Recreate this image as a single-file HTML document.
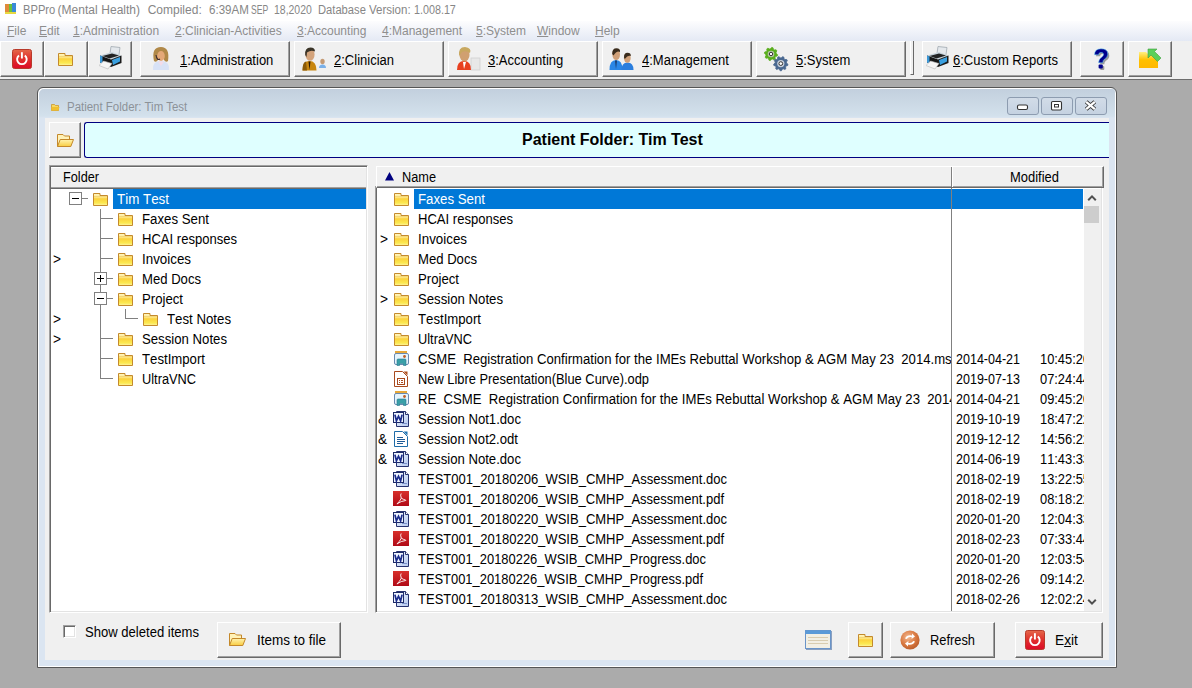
<!DOCTYPE html>
<html><head><meta charset="utf-8">
<style>
*{box-sizing:border-box;margin:0;padding:0}
html,body{width:1192px;height:688px;overflow:hidden;background:#ababab;font-family:"Liberation Sans",sans-serif;font-size:13px;color:#000}
.a{position:absolute}
u{text-decoration:underline}
.tt{position:absolute;top:3px;font-size:12px;color:#868686;white-space:nowrap}
.mi{position:absolute;top:24px;font-size:12px;color:#8e8e8e;white-space:nowrap}
.btn{position:absolute;top:41px;height:36px;background:#f0f0f0;border-top:1px solid #fff;border-left:1px solid #fff;border-right:1px solid #696969;border-bottom:1px solid #696969;box-shadow:inset -1px -1px 0 #a0a0a0}
.bt{position:absolute;top:8px;font-size:14px;line-height:20px;white-space:nowrap;transform:scaleX(0.93);transform-origin:0 0}
.cap{position:absolute;top:97px;width:32px;height:18px;border:1px solid #8d9cb0;border-radius:3px;background:linear-gradient(#d2dce8,#c5d2e1)}
.pbtn{position:absolute;background:#f0f0f0;border-top:1px solid #fff;border-left:1px solid #fff;border-right:1px solid #696969;border-bottom:1px solid #696969;box-shadow:inset -1px -1px 0 #a0a0a0}
.sunk{position:absolute;background:#fff;border-top:1px solid #a0a0a0;border-left:1px solid #a0a0a0;border-right:1px solid #fff;border-bottom:1px solid #fff;box-shadow:inset 1px 1px 0 #696969,inset -1px -1px 0 #e3e3e3}
.row{position:absolute;height:20px;white-space:nowrap;font-size:14px;line-height:20px;font-kerning:none;transform-origin:0 0}
.lb{position:absolute;white-space:nowrap;font-size:14px;line-height:20px;font-kerning:none;transform-origin:0 0}
.sel{position:absolute;background:#0078d7}
</style></head><body>
<svg width="0" height="0" style="position:absolute">
<defs>
<linearGradient id="fg" x1="0" y1="0" x2="0" y2="1">
<stop offset="0" stop-color="#fff8c8"/><stop offset="0.3" stop-color="#ffe88a"/><stop offset="0.45" stop-color="#fcd23c"/><stop offset="0.8" stop-color="#fbea52"/><stop offset="1" stop-color="#fff4a8"/>
</linearGradient>
<symbol id="fold" viewBox="0 0 15 13"><path d="M0.5 0.5h6.5v2h7.5v10h-14z" fill="url(#fg)" stroke="#c48a2c"/><path d="M1 3.5h13" stroke="#f3d77a"/></symbol>
<linearGradient id="pg" x1="0" y1="0" x2="0" y2="1"><stop offset="0" stop-color="#e4684a"/><stop offset="0.5" stop-color="#e0302c"/><stop offset="1" stop-color="#dc0a28"/></linearGradient>
<symbol id="pwr" viewBox="0 0 20 20"><rect x="0.5" y="0.5" width="19" height="19" rx="2" fill="url(#pg)" stroke="#b83a2a"/><path d="M7 6.5A4.8 4.8 0 1 0 12.8 6.5" fill="none" stroke="#fff" stroke-width="1.9"/><path d="M9.9 3.2V9.5" stroke="#fff" stroke-width="1.9"/></symbol>
<radialGradient id="rg" cx="0.4" cy="0.35" r="0.7"><stop offset="0" stop-color="#f4b890"/><stop offset="0.6" stop-color="#d87840"/><stop offset="1" stop-color="#b85a28"/></radialGradient>
<linearGradient id="fo" x1="0" y1="0" x2="0" y2="1"><stop offset="0" stop-color="#fff3b0"/><stop offset="1" stop-color="#f8cc40"/></linearGradient>
<linearGradient id="fa" x1="0" y1="0" x2="0" y2="1"><stop offset="0" stop-color="#fff080"/><stop offset="0.5" stop-color="#ffc000"/><stop offset="1" stop-color="#ffb800"/></linearGradient><linearGradient id="dg" x1="0" y1="0" x2="1" y2="1"><stop offset="0" stop-color="#eef4fe"/><stop offset="1" stop-color="#b4c8ee"/></linearGradient>
<linearGradient id="pdg" x1="0" y1="0" x2="0" y2="1"><stop offset="0" stop-color="#d8302c"/><stop offset="1" stop-color="#b00a16"/></linearGradient>
<symbol id="doc" viewBox="0 0 16 16"><path d="M3.5 0.5H12.5L15.5 3.5V15.5H3.5Z" fill="url(#dg)" stroke="#26326e"/><path d="M12.5 0.5V3.5H15.5" fill="#fff" stroke="#26326e"/><path d="M9 12.5H14" stroke="#7a90c8"/><rect x="0.5" y="1.5" width="10" height="10" fill="#f0f6ff" stroke="#1c2a66"/><path d="M1.9 3.6L3.4 9.8L5.5 5.2L7.6 9.8L9.1 3.6" fill="none" stroke="#1a2c8c" stroke-width="1.7"/></symbol>
<symbol id="pdf" viewBox="0 0 16 16"><rect x="0" y="0" width="16" height="15" fill="url(#pdg)"/><path d="M8.2 2.5Q7 3.5 8.3 7.2Q6.5 11 4 12.8Q3.6 13.4 4.6 12.6Q8 10 12.4 9.6Q13.2 9.4 12.6 9Q10.5 8.6 8.3 7.2" fill="none" stroke="#fff" stroke-width="0.9"/></symbol>
<symbol id="odt" viewBox="0 0 16 16"><path d="M1.5 0.5H9.5L14.5 5.5V15.5H1.5Z" fill="#fff" stroke="#1e6ca8" stroke-linejoin="round"/><path d="M10.5 0.5H14.5V4.5Z" fill="#1e74b4"/><path d="M4 6.5H10M4 8.5H12M4 10.5H12M4 12.5H10" stroke="#1e5a96"/></symbol>
<symbol id="odp" viewBox="0 0 16 16"><path d="M1.5 0.5H9.5L14.5 5.5V15.5H1.5Z" fill="#fff" stroke="#a84a1e" stroke-linejoin="round"/><path d="M10.5 0.5H14.5V4.5Z" fill="#b0501e"/><rect x="4.5" y="7.5" width="7" height="6" fill="none" stroke="#a84a1e"/><path d="M6 9.5h1M8 9.5h2M6 11.5h1M8 11.5h2" stroke="#a84a1e"/></symbol>
<symbol id="msg" viewBox="0 0 16 16"><rect x="2" y="0" width="12" height="3" fill="#e8a838"/><rect x="1.5" y="2.5" width="14" height="11" rx="1.5" fill="#e6f4fc" stroke="#6a8ab0"/><circle cx="11.5" cy="5.5" r="1.4" fill="#c0602a"/><path d="M4 14.5V9Q4 8 5 8H12Q13 8 13 9V14.5H10.5V12.5H6.5V14.5Z" fill="#3aa0a8" stroke="#2a7a90" stroke-width="0.6"/></symbol>
</defs></svg>
<div class="a" style="left:0;top:0;width:1192px;height:21px;background:#fff"></div>
<div class="a" style="left:0;top:21px;width:1192px;height:20px;background:linear-gradient(#fdfdfe,#e4e9f4)"></div>
<div class="a" style="left:0;top:41px;width:1192px;height:39px;background:#f0f0f0;border-bottom:1px solid #6d6d6d"></div>
<div class="tt" style="left:22.6px;transform:scaleX(0.93);transform-origin:0 0">BPPro</div>
<div class="tt" style="left:57.6px;transform:scaleX(1.0);transform-origin:0 0">(Mental</div>
<div class="tt" style="left:101.3px;transform:scaleX(1.0);transform-origin:0 0">Health)</div>
<div class="tt" style="left:147.7px;transform:scaleX(1.0);transform-origin:0 0">Compiled:</div>
<div class="tt" style="left:208.5px;transform:scaleX(0.962);transform-origin:0 0">6:39AM</div>
<div class="tt" style="left:251px;transform:scaleX(0.717);transform-origin:0 0">SEP</div>
<div class="tt" style="left:274px;transform:scaleX(0.871);transform-origin:0 0">18,2020</div>
<div class="tt" style="left:317.9px;transform:scaleX(0.932);transform-origin:0 0">Database</div>
<div class="tt" style="left:369.1px;transform:scaleX(0.96);transform-origin:0 0">Version:</div>
<div class="tt" style="left:413.5px;transform:scaleX(0.896);transform-origin:0 0">1.008.17</div>
<div class="mi" style="left:7px"><u>F</u>ile</div>
<div class="mi" style="left:39px"><u>E</u>dit</div>
<div class="mi" style="left:73px"><u>1</u>:Administration</div>
<div class="mi" style="left:175px"><u>2</u>:Clinician-Activities</div>
<div class="mi" style="left:297px"><u>3</u>:Accounting</div>
<div class="mi" style="left:382px"><u>4</u>:Management</div>
<div class="mi" style="left:476px"><u>5</u>:System</div>
<div class="mi" style="left:537px"><u>W</u>indow</div>
<div class="mi" style="left:595px"><u>H</u>elp</div>
<div class="btn" style="left:0px;width:44px"></div>
<div class="btn" style="left:44px;width:44px"></div>
<div class="btn" style="left:88px;width:44px"></div>
<div class="btn" style="left:140px;width:150px"><span class="bt" style="left:39px"><u>1</u>:Administration</span></div>
<div class="btn" style="left:294px;width:150px"><span class="bt" style="left:39px"><u>2</u>:Clinician</span></div>
<div class="btn" style="left:448px;width:150px"><span class="bt" style="left:39px"><u>3</u>:Accounting</span></div>
<div class="btn" style="left:602px;width:150px"><span class="bt" style="left:39px"><u>4</u>:Management</span></div>
<div class="btn" style="left:756px;width:150px"><span class="bt" style="left:39px"><u>5</u>:System</span></div>
<div class="btn" style="left:922px;width:150px"><span class="bt" style="left:30px"><u>6</u>:Custom Reports</span></div>
<div class="btn" style="left:1080px;width:44px"></div>
<div class="btn" style="left:1128px;width:44px"></div>
<div class="a" style="left:910px;top:41px;width:4px;height:34px;border-left:1px solid #fff;border-right:1px solid #696969;border-bottom:1px solid #696969"></div>
<div class="a" style="left:37px;top:87px;width:1080px;height:581px;border:1px solid #555;border-radius:6px 6px 0 0;background:linear-gradient(#c2cfdd 0px,#d3e1ec 28px,#dbe5f1 30px,#dbe5f1 100%);box-shadow:inset 1px 1px 0 #fff,inset -1px -1px 0 #fff"></div>
<div class="a" style="left:67px;top:100px;font-size:12px;color:#8c9298;transform:scaleX(0.955);transform-origin:0 0">Patient Folder: Tim Test</div>
<div class="cap" style="left:1007px"></div>
<div class="cap" style="left:1041px"></div>
<div class="cap" style="left:1075px"></div>
<div class="a" style="left:45px;top:118px;width:1064px;height:542px;background:#f0f0f0"></div>
<div class="pbtn" style="left:49px;top:122px;width:32px;height:36px"></div>
<div class="a" style="left:84px;top:122px;width:1025px;height:36px;background:#dfffff;border:1px solid #000080;border-right:none;border-radius:3px 0 0 3px"></div>
<div class="a" style="left:522px;top:131px;font-size:16px;font-weight:bold">Patient Folder: Tim Test</div>
<div class="sunk" style="left:49px;top:165px;width:319px;height:448px"></div>
<div class="a" style="left:51px;top:167px;width:315px;height:22px;background:#f0f0f0;border-top:1px solid #fff;border-bottom:1px solid #696969;box-shadow:inset 0 -1px 0 #a0a0a0"></div>
<div class="lb" style="left:63px;top:167px;transform:scaleX(0.9072)">Folder</div>
<div class="sel" style="left:113px;top:189px;width:253px;height:20px"></div>
<svg class="a" style="left:0;top:0" width="400" height="620">
<path d="M100.5 209V379" stroke="#808080"/>
<path d="M82 198.5H88" stroke="#808080"/>
<path d="M100 218.5H113" stroke="#808080"/>
<path d="M100 238.5H113" stroke="#808080"/>
<path d="M100 258.5H113" stroke="#808080"/>
<path d="M100 278.5H113" stroke="#808080"/>
<path d="M100 298.5H113" stroke="#808080"/>
<path d="M100 338.5H113" stroke="#808080"/>
<path d="M100 358.5H113" stroke="#808080"/>
<path d="M100 378.5H113" stroke="#808080"/>
<path d="M125.5 309V319" stroke="#808080"/>
<path d="M125 318.5H138" stroke="#808080"/>
</svg>
<svg class="a" style="left:93px;top:193px" width="15" height="13"><use href="#fold"/></svg>
<div class="row" style="left:117px;top:189px;color:#fff;transform:scaleX(0.9552)">Tim Test</div>
<svg class="a" style="left:118px;top:213px" width="15" height="13"><use href="#fold"/></svg>
<div class="row" style="left:142px;top:209px;color:#000;transform:scaleX(0.9461)">Faxes Sent</div>
<svg class="a" style="left:118px;top:233px" width="15" height="13"><use href="#fold"/></svg>
<div class="row" style="left:142px;top:229px;color:#000;transform:scaleX(0.9320)">HCAI responses</div>
<svg class="a" style="left:118px;top:253px" width="15" height="13"><use href="#fold"/></svg>
<div class="row" style="left:142px;top:249px;color:#000;transform:scaleX(0.9541)">Invoices</div>
<svg class="a" style="left:118px;top:273px" width="15" height="13"><use href="#fold"/></svg>
<div class="row" style="left:142px;top:269px;color:#000;transform:scaleX(0.9362)">Med Docs</div>
<svg class="a" style="left:118px;top:293px" width="15" height="13"><use href="#fold"/></svg>
<div class="row" style="left:142px;top:289px;color:#000;transform:scaleX(0.9410)">Project</div>
<svg class="a" style="left:143px;top:313px" width="15" height="13"><use href="#fold"/></svg>
<div class="row" style="left:167px;top:309px;color:#000;transform:scaleX(0.9455)">Test Notes</div>
<svg class="a" style="left:118px;top:333px" width="15" height="13"><use href="#fold"/></svg>
<div class="row" style="left:142px;top:329px;color:#000;transform:scaleX(0.9416)">Session Notes</div>
<svg class="a" style="left:118px;top:353px" width="15" height="13"><use href="#fold"/></svg>
<div class="row" style="left:142px;top:349px;color:#000;transform:scaleX(0.9417)">TestImport</div>
<svg class="a" style="left:118px;top:373px" width="15" height="13"><use href="#fold"/></svg>
<div class="row" style="left:142px;top:369px;color:#000;transform:scaleX(0.9134)">UltraVNC</div>
<svg class="a" style="left:69px;top:192px" width="13" height="13"><rect x="0.5" y="0.5" width="12" height="12" fill="#fff" stroke="#808080"/><path d="M3 6.5h7" stroke="#000"/></svg>
<svg class="a" style="left:94px;top:272px" width="13" height="13"><rect x="0.5" y="0.5" width="12" height="12" fill="#fff" stroke="#808080"/><path d="M3 6.5h7" stroke="#000"/><path d="M6.5 3v7" stroke="#000"/></svg>
<svg class="a" style="left:94px;top:292px" width="13" height="13"><rect x="0.5" y="0.5" width="12" height="12" fill="#fff" stroke="#808080"/><path d="M3 6.5h7" stroke="#000"/></svg>
<div class="row" style="left:53px;top:249px;transform:scaleX(0.9785)">&gt;</div>
<div class="row" style="left:53px;top:309px;transform:scaleX(0.9785)">&gt;</div>
<div class="row" style="left:53px;top:329px;transform:scaleX(0.9785)">&gt;</div>
<div class="sunk" style="left:375px;top:186px;width:728px;height:427px"></div>
<div class="a" style="left:376px;top:166px;width:728px;height:22px;background:#f0f0f0;border-top:1px solid #fff;border-left:1px solid #fff;border-bottom:1px solid #696969;border-right:1px solid #696969;box-shadow:inset -1px -1px 0 #a0a0a0"></div>
<div class="a" style="left:951px;top:167px;width:1px;height:20px;background:#808080"></div>
<div class="a" style="left:952px;top:167px;width:1px;height:20px;background:#fff"></div>
<svg class="a" style="left:385px;top:172px" width="9" height="9"><path d="M4.5 0L9 8.5H0z" fill="#000080"/></svg>
<div class="lb" style="left:402px;top:167px;transform:scaleX(0.9104)">Name</div>
<div class="lb" style="left:1010px;top:167px;transform:scaleX(0.9260)">Modified</div>
<div class="sel" style="left:414px;top:189px;width:669px;height:20px"></div>
<div class="a" style="left:951px;top:188px;width:1px;height:423px;background:#808080"></div>
<div class="a" style="left:377px;top:189px;width:574px;height:422px;overflow:hidden">
<svg class="a" style="left:17px;top:4px" width="15" height="13"><use href="#fold"/></svg>
<div class="row" style="left:41px;top:0px;color:#fff;transform:scaleX(0.9461)">Faxes Sent</div>
<svg class="a" style="left:17px;top:24px" width="15" height="13"><use href="#fold"/></svg>
<div class="row" style="left:41px;top:20px;color:#000;transform:scaleX(0.9320)">HCAI responses</div>
<div class="row" style="left:3px;top:40px;transform:scaleX(0.9785)">&gt;</div>
<svg class="a" style="left:17px;top:44px" width="15" height="13"><use href="#fold"/></svg>
<div class="row" style="left:41px;top:40px;color:#000;transform:scaleX(0.9541)">Invoices</div>
<svg class="a" style="left:17px;top:64px" width="15" height="13"><use href="#fold"/></svg>
<div class="row" style="left:41px;top:60px;color:#000;transform:scaleX(0.9362)">Med Docs</div>
<svg class="a" style="left:17px;top:84px" width="15" height="13"><use href="#fold"/></svg>
<div class="row" style="left:41px;top:80px;color:#000;transform:scaleX(0.9410)">Project</div>
<div class="row" style="left:3px;top:100px;transform:scaleX(0.9785)">&gt;</div>
<svg class="a" style="left:17px;top:104px" width="15" height="13"><use href="#fold"/></svg>
<div class="row" style="left:41px;top:100px;color:#000;transform:scaleX(0.9416)">Session Notes</div>
<svg class="a" style="left:17px;top:124px" width="15" height="13"><use href="#fold"/></svg>
<div class="row" style="left:41px;top:120px;color:#000;transform:scaleX(0.9417)">TestImport</div>
<svg class="a" style="left:17px;top:144px" width="15" height="13"><use href="#fold"/></svg>
<div class="row" style="left:41px;top:140px;color:#000;transform:scaleX(0.9134)">UltraVNC</div>
<svg class="a" style="left:16px;top:162px" width="16" height="16"><use href="#msg"/></svg>
<div class="row" style="left:41px;top:160px;color:#000;transform:scaleX(0.9383)">CSME&nbsp; Registration Confirmation for the IMEs Rebuttal Workshop &amp; AGM May 23&nbsp; 2014.msg</div>
<svg class="a" style="left:16px;top:182px" width="16" height="16"><use href="#odp"/></svg>
<div class="row" style="left:41px;top:180px;color:#000;transform:scaleX(0.9190)">New Libre Presentation(Blue Curve).odp</div>
<svg class="a" style="left:16px;top:202px" width="16" height="16"><use href="#msg"/></svg>
<div class="row" style="left:41px;top:200px;color:#000;transform:scaleX(0.9391)">RE&nbsp; CSME&nbsp; Registration Confirmation for the IMEs Rebuttal Workshop &amp; AGM May 23&nbsp; 2014.msg</div>
<div class="row" style="left:1px;top:220px;transform:scaleX(0.9638)">&amp;</div>
<svg class="a" style="left:16px;top:222px" width="16" height="16"><use href="#doc"/></svg>
<div class="row" style="left:41px;top:220px;color:#000;transform:scaleX(0.9387)">Session Not1.doc</div>
<div class="row" style="left:1px;top:240px;transform:scaleX(0.9638)">&amp;</div>
<svg class="a" style="left:16px;top:242px" width="16" height="16"><use href="#odt"/></svg>
<div class="row" style="left:41px;top:240px;color:#000;transform:scaleX(0.9379)">Session Not2.odt</div>
<div class="row" style="left:1px;top:260px;transform:scaleX(0.9638)">&amp;</div>
<svg class="a" style="left:16px;top:262px" width="16" height="16"><use href="#doc"/></svg>
<div class="row" style="left:41px;top:260px;color:#000;transform:scaleX(0.9387)">Session Note.doc</div>
<svg class="a" style="left:16px;top:282px" width="16" height="16"><use href="#doc"/></svg>
<div class="row" style="left:41px;top:280px;color:#000;transform:scaleX(0.9299)">TEST001_20180206_WSIB_CMHP_Assessment.doc</div>
<svg class="a" style="left:16px;top:302px" width="16" height="16"><use href="#pdf"/></svg>
<div class="row" style="left:41px;top:300px;color:#000;transform:scaleX(0.9296)">TEST001_20180206_WSIB_CMHP_Assessment.pdf</div>
<svg class="a" style="left:16px;top:322px" width="16" height="16"><use href="#doc"/></svg>
<div class="row" style="left:41px;top:320px;color:#000;transform:scaleX(0.9299)">TEST001_20180220_WSIB_CMHP_Assessment.doc</div>
<svg class="a" style="left:16px;top:342px" width="16" height="16"><use href="#pdf"/></svg>
<div class="row" style="left:41px;top:340px;color:#000;transform:scaleX(0.9296)">TEST001_20180220_WSIB_CMHP_Assessment.pdf</div>
<svg class="a" style="left:16px;top:362px" width="16" height="16"><use href="#doc"/></svg>
<div class="row" style="left:41px;top:360px;color:#000;transform:scaleX(0.9229)">TEST001_20180226_WSIB_CMHP_Progress.doc</div>
<svg class="a" style="left:16px;top:382px" width="16" height="16"><use href="#pdf"/></svg>
<div class="row" style="left:41px;top:380px;color:#000;transform:scaleX(0.9225)">TEST001_20180226_WSIB_CMHP_Progress.pdf</div>
<svg class="a" style="left:16px;top:402px" width="16" height="16"><use href="#doc"/></svg>
<div class="row" style="left:41px;top:400px;color:#000;transform:scaleX(0.9299)">TEST001_20180313_WSIB_CMHP_Assessment.doc</div>
</div>
<div class="a" style="left:952px;top:189px;width:132px;height:422px;overflow:hidden">
<div class="row" style="left:4px;top:160px;transform:scaleX(0.8937)">2014-04-21</div>
<div class="row" style="left:88px;top:160px;transform:scaleX(0.9175)">10:45:26</div>
<div class="row" style="left:4px;top:180px;transform:scaleX(0.8937)">2019-07-13</div>
<div class="row" style="left:88px;top:180px;transform:scaleX(0.9175)">07:24:44</div>
<div class="row" style="left:4px;top:200px;transform:scaleX(0.8937)">2014-04-21</div>
<div class="row" style="left:88px;top:200px;transform:scaleX(0.9175)">09:45:26</div>
<div class="row" style="left:4px;top:220px;transform:scaleX(0.8937)">2019-10-19</div>
<div class="row" style="left:88px;top:220px;transform:scaleX(0.9175)">18:47:22</div>
<div class="row" style="left:4px;top:240px;transform:scaleX(0.8937)">2019-12-12</div>
<div class="row" style="left:88px;top:240px;transform:scaleX(0.9175)">14:56:22</div>
<div class="row" style="left:4px;top:260px;transform:scaleX(0.8937)">2014-06-19</div>
<div class="row" style="left:88px;top:260px;transform:scaleX(0.9175)">11:43:33</div>
<div class="row" style="left:4px;top:280px;transform:scaleX(0.8937)">2018-02-19</div>
<div class="row" style="left:88px;top:280px;transform:scaleX(0.9175)">13:22:55</div>
<div class="row" style="left:4px;top:300px;transform:scaleX(0.8937)">2018-02-19</div>
<div class="row" style="left:88px;top:300px;transform:scaleX(0.9175)">08:18:22</div>
<div class="row" style="left:4px;top:320px;transform:scaleX(0.8937)">2020-01-20</div>
<div class="row" style="left:88px;top:320px;transform:scaleX(0.9175)">12:04:33</div>
<div class="row" style="left:4px;top:340px;transform:scaleX(0.8937)">2018-02-23</div>
<div class="row" style="left:88px;top:340px;transform:scaleX(0.9175)">07:33:44</div>
<div class="row" style="left:4px;top:360px;transform:scaleX(0.8937)">2020-01-20</div>
<div class="row" style="left:88px;top:360px;transform:scaleX(0.9175)">12:03:54</div>
<div class="row" style="left:4px;top:380px;transform:scaleX(0.8937)">2018-02-26</div>
<div class="row" style="left:88px;top:380px;transform:scaleX(0.9175)">09:14:24</div>
<div class="row" style="left:4px;top:400px;transform:scaleX(0.8937)">2018-02-26</div>
<div class="row" style="left:88px;top:400px;transform:scaleX(0.9175)">12:02:24</div>
</div>
<div class="a" style="left:1084px;top:189px;width:17px;height:422px;background:#f0f0f0"></div>
<div class="a" style="left:1084px;top:206px;width:15px;height:17px;background:#cdcdcd"></div>
<svg class="a" style="left:1087px;top:194px" width="10" height="8"><path d="M1.2 6.2L5 2.4L8.8 6.2" fill="none" stroke="#505050" stroke-width="2"/></svg>
<svg class="a" style="left:1087px;top:598px" width="10" height="8"><path d="M1.2 1.8L5 5.6L8.8 1.8" fill="none" stroke="#505050" stroke-width="2"/></svg>
<svg class="a" style="left:5px;top:3px" width="11" height="12"><rect x="0" y="1" width="4" height="10" fill="#e08a3a"/><rect x="4" y="1" width="3" height="10" fill="#6ac23a"/><rect x="7" y="0" width="4" height="10" fill="#3a8ad8"/><rect x="0" y="9" width="11" height="2" fill="#e8d840"/></svg>
<svg class="a" style="left:12px;top:49px" width="20" height="20"><use href="#pwr"/></svg>
<svg class="a" style="left:58px;top:53px" width="15" height="13"><use href="#fold"/></svg>
<svg class="a" style="left:99px;top:46px" width="23" height="24"><path d="M12 0.5L21 1.5L19.5 12L10.5 11Z" fill="#e4e8ec" stroke="#a0a8b0" stroke-width="0.8"/>
<path d="M1 9.5L13 6L22.5 9.5L12 13.5Z" fill="#c8d4dc"/>
<path d="M3.5 10L13 7.4L20 9.6L10.5 12.6Z" fill="#222"/>
<path d="M1 9.5L12 13.5V21L1 16.5Z" fill="#151515"/>
<path d="M1 9.5L3.5 10.4V17.5L1 16.5Z" fill="#3a98d8"/>
<path d="M12 13.5L22.5 9.5V17L12 21Z" fill="#1a1a1a"/>
<path d="M13 14L21 11V15.5L14 19Z" fill="#3aa0e0"/>
<path d="M0 19.5L4.5 15L13 17.5L9 23Z" fill="#f6f6f6" stroke="#b8b8b8" stroke-width="0.6"/></svg>
<svg class="a" style="left:926px;top:46px" width="23" height="24"><path d="M12 0.5L21 1.5L19.5 12L10.5 11Z" fill="#e4e8ec" stroke="#a0a8b0" stroke-width="0.8"/>
<path d="M1 9.5L13 6L22.5 9.5L12 13.5Z" fill="#c8d4dc"/>
<path d="M3.5 10L13 7.4L20 9.6L10.5 12.6Z" fill="#222"/>
<path d="M1 9.5L12 13.5V21L1 16.5Z" fill="#151515"/>
<path d="M1 9.5L3.5 10.4V17.5L1 16.5Z" fill="#3a98d8"/>
<path d="M12 13.5L22.5 9.5V17L12 21Z" fill="#1a1a1a"/>
<path d="M13 14L21 11V15.5L14 19Z" fill="#3aa0e0"/>
<path d="M0 19.5L4.5 15L13 17.5L9 23Z" fill="#f6f6f6" stroke="#b8b8b8" stroke-width="0.6"/></svg>
<svg class="a" style="left:151px;top:46px" width="20" height="25">
<path d="M2 24Q1 15 10 15Q19 15 18 24Z" fill="#d8e2f6"/><path d="M7 15.5L10 20L13 15.5Z" fill="#f4dce8"/>
<path d="M3 15Q0 1 10 1Q19 1 17 15Q15 17 13 14L13 8Q10 6 7 8L7 14Q5 17 3 15Z" fill="#b08848"/>
<ellipse cx="10" cy="10" rx="3.8" ry="5" fill="#e4a878"/><path d="M5 9Q6 15 9 13" stroke="#3a2a30" fill="none" stroke-width="1.1"/>
</svg>
<svg class="a" style="left:302px;top:47px" width="24" height="25">
<path d="M0.5 23.5Q0.5 14 7.5 14Q14.5 14 14.5 23.5Z" fill="#c8860e"/><path d="M0.5 23.5Q0.5 15 4 14.5L5 23.5Z" fill="#8a5a08"/><path d="M6.5 14.5L7.5 23L8.5 14.5Z" fill="#2a1a0a"/>
<ellipse cx="8" cy="7.5" rx="4.6" ry="6.3" fill="#d4a47c"/><path d="M3.2 8Q2.5 0.5 8.5 0.5Q13 0.5 13 4.5Q9 2.5 5 5.5L4.5 10Z" fill="#3a3428"/>
<ellipse cx="20.5" cy="14.5" rx="2.2" ry="2.7" fill="#c49a74"/><path d="M17 21Q17 17.5 20.5 17.5Q24 17.5 24 21Z" fill="#7ab0e8"/>
</svg>
<svg class="a" style="left:456px;top:47px" width="25" height="25">
<rect x="15" y="11" width="9" height="12" fill="#e8e8e8" stroke="#d0d0d0" stroke-width="0.8"/>
<path d="M1 23Q1 14 8 14Q15 14 15 23Z" fill="#e84020"/><path d="M7 15L8 22L10 15Z" fill="#fff"/>
<ellipse cx="8.5" cy="8" rx="5" ry="6.5" fill="#d0a070"/><path d="M3 9Q2 0 9 0Q16 1 14 6Q10 3 6 5Z" fill="#c8a860"/>
</svg>
<svg class="a" style="left:609px;top:48px" width="26" height="23">
<path d="M0.5 22Q0.5 12 7 12Q13.5 12 13.5 22Z" fill="#2a86e6"/><path d="M6 12.5L7 21L8 12.5Z" fill="#1a3a6a"/><ellipse cx="7.2" cy="6.5" rx="3.8" ry="5.6" fill="#d0a078"/><path d="M3.2 6Q3 0.3 7.5 0.3Q11.5 0.3 11 4Q8 2 4.5 7.5Z" fill="#3a2c1c"/>
<path d="M12.5 22Q12.5 14.5 18.5 14.5Q24.5 14.5 24.5 22Z" fill="#2a7ede"/><ellipse cx="18.3" cy="10" rx="3.4" ry="4.8" fill="#d0a078"/><path d="M15 9.5Q14.8 4.8 18.5 4.8Q22 4.8 21.8 8Q19 6.5 15.8 11Z" fill="#3a2c1c"/>
</svg>
<svg class="a" style="left:762px;top:45px" width="28" height="28"><polygon points="15.57,9.65 15.32,10.92 13.66,11.49 13.08,12.35 13.19,14.10 12.11,14.82 10.53,14.05 9.52,14.25 8.35,15.57 7.08,15.32 6.51,13.66 5.65,13.08 3.90,13.19 3.18,12.11 3.95,10.53 3.75,9.52 2.43,8.35 2.68,7.08 4.34,6.51 4.92,5.65 4.81,3.90 5.89,3.18 7.47,3.95 8.48,3.75 9.65,2.43 10.92,2.68 11.49,4.34 12.35,4.92 14.10,4.81 14.82,5.89 14.05,7.47 14.25,8.48" fill="#5aae1e" stroke="#5aae1e" stroke-width="0.8" stroke-linejoin="round"/><circle cx="9" cy="9" r="3.30" fill="#b8c8a8"/><circle cx="9" cy="9" r="1.72" fill="#fff" stroke="#222" stroke-width="0.9"/><polygon points="25.97,19.23 25.75,20.46 24.02,21.03 23.52,21.90 23.89,23.69 22.93,24.50 21.23,23.82 20.29,24.16 19.43,25.77 18.17,25.77 17.31,24.16 16.37,23.82 14.67,24.50 13.71,23.69 14.08,21.90 13.58,21.03 11.85,20.46 11.63,19.23 13.06,18.10 13.24,17.11 12.27,15.56 12.90,14.47 14.73,14.53 15.50,13.88 15.76,12.07 16.94,11.65 18.30,12.86 19.30,12.86 20.66,11.65 21.84,12.07 22.10,13.88 22.87,14.53 24.70,14.47 25.33,15.56 24.36,17.11 24.54,18.10" fill="#4a6890" stroke="#4a6890" stroke-width="0.8" stroke-linejoin="round"/><circle cx="18.8" cy="18.6" r="3.60" fill="#c8d0dc"/><circle cx="18.8" cy="18.6" r="1.87" fill="#fff" stroke="#222" stroke-width="0.9"/></svg>
<svg class="a" style="left:1093px;top:48px" width="20" height="25"><g transform="translate(1.5,1.5)"><path d="M1.5 6.8Q1.5 0.8 8 0.8Q14.8 0.8 14.8 6.2Q14.8 9.2 11.4 11.2Q9.8 12.2 9.8 14.8H5.6Q5.6 11.2 8.6 9.2Q10.6 7.8 10.6 6.2Q10.6 4.4 8 4.4Q5.6 4.4 5.6 6.8Z" fill="#9a9a9a"/><rect x="5.6" y="16.6" width="4.2" height="4" rx="1" fill="#9a9a9a"/></g><path d="M1.5 6.8Q1.5 0.8 8 0.8Q14.8 0.8 14.8 6.2Q14.8 9.2 11.4 11.2Q9.8 12.2 9.8 14.8H5.6Q5.6 11.2 8.6 9.2Q10.6 7.8 10.6 6.2Q10.6 4.4 8 4.4Q5.6 4.4 5.6 6.8Z" fill="#00008c" stroke="#6ad8ff" stroke-width="0.5"/><rect x="5.6" y="16.6" width="4.2" height="4" rx="1" fill="#00008c"/></svg>
<svg class="a" style="left:1139px;top:48px" width="23" height="21">
<path d="M0 4h7l2 2h10v14h-19z" fill="url(#fa)"/>
<path d="M9 1h9l-2.5 2.5L22 10l-3.5 3.5L12 7l-3 3z" fill="#5ad05a" stroke="#40a040" stroke-width="0.6"/>
</svg>
<svg class="a" style="left:51px;top:103px" width="9" height="8"><path d="M0.5 1.5h3l1 1h3v5h-7z" fill="#f8d860" stroke="#c89020" stroke-width="0.7"/><path d="M0.5 4h8l-1 3.5h-7z" fill="#f0c030"/></svg>
<svg class="a" style="left:1016px;top:104px" width="13" height="7"><rect x="1.5" y="1" width="10" height="4.5" rx="1.5" fill="#fff" stroke="#333" stroke-width="1.1"/></svg>
<svg class="a" style="left:1050px;top:100px" width="13" height="11"><rect x="1.5" y="1.5" width="10" height="8.5" rx="1.2" fill="#fff" stroke="#333" stroke-width="1.1"/><rect x="4.5" y="4.5" width="4" height="2.5" fill="none" stroke="#333" stroke-width="1"/></svg>
<svg class="a" style="left:1084px;top:100px" width="13" height="11"><path d="M2.2 1.8L10.8 9.2M10.8 1.8L2.2 9.2" fill="none" stroke="#3a3a3a" stroke-width="4"/><path d="M2.2 1.8L10.8 9.2M10.8 1.8L2.2 9.2" fill="none" stroke="#fff" stroke-width="2.2"/></svg>
<svg class="a" style="left:57px;top:134px" width="17" height="13"><path d="M0.5 12.5V0.5H6L7.5 2H12.5V5" fill="#fff2b8" stroke="#c4882a"/><path d="M0.5 12.5L3.2 5.5H16.5L13.8 12.5Z" fill="url(#fo)" stroke="#c4882a" stroke-linejoin="round"/></svg>
<div class="a" style="left:63px;top:625px;width:13px;height:13px;background:#fff;border-top:1px solid #a0a0a0;border-left:1px solid #a0a0a0;border-right:1px solid #fff;border-bottom:1px solid #fff;box-shadow:inset 1px 1px 0 #696969,inset -1px -1px 0 #e3e3e3"></div>
<div class="row" style="left:85px;top:622px;transform:scaleX(0.9331)">Show deleted items</div>
<div class="pbtn" style="left:217px;top:622px;width:124px;height:36px"></div>
<svg class="a" style="left:229px;top:633px" width="17" height="13"><path d="M0.5 12.5V0.5H6L7.5 2H12.5V5" fill="#fff2b8" stroke="#c4882a"/><path d="M0.5 12.5L3.2 5.5H16.5L13.8 12.5Z" fill="url(#fo)" stroke="#c4882a" stroke-linejoin="round"/></svg>
<div class="row" style="left:257px;top:630px;transform:scaleX(0.9640)">Items to file</div>
<svg class="a" style="left:805px;top:630px" width="28" height="21"><rect x="1" y="1" width="26" height="19" fill="#8aa0c0"/><rect x="0.5" y="0.5" width="25" height="18" fill="#f2efe4" stroke="#6a94c8"/><rect x="0.5" y="0.5" width="25" height="3.5" fill="#5a9ad8"/><path d="M3 7.5h20M3 10.5h20M3 13.5h20" stroke="#d8ccb0"/></svg>
<div class="pbtn" style="left:848px;top:622px;width:35px;height:36px"></div>
<svg class="a" style="left:858px;top:634px" width="15" height="13"><use href="#fold"/></svg>
<div class="pbtn" style="left:890px;top:622px;width:105px;height:36px"></div>
<svg class="a" style="left:900px;top:630px" width="20" height="20"><circle cx="10" cy="10" r="9.6" fill="url(#rg)"/><path d="M5 8.5Q7 4.5 12 5.5L12 3.5L15 6.5L11.5 9L11.8 7.3Q8 6.5 6.8 9Z" fill="#fff"/><path d="M15 11.5Q13 15.5 8 14.5L8 16.5L5 13.5L8.5 11L8.2 12.7Q12 13.5 13.2 11Z" fill="#fff"/></svg>
<div class="row" style="left:930px;top:630px;transform:scaleX(0.9180)">Refresh</div>
<div class="pbtn" style="left:1015px;top:622px;width:88px;height:36px"></div>
<svg class="a" style="left:1025px;top:630px" width="20" height="20"><use href="#pwr"/></svg>
<div class="row" style="left:1055px;top:630px;transform:scaleX(0.9793)">E<u>x</u>it</div>

</body></html>
